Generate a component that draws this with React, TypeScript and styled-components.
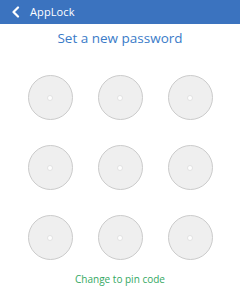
import styled, { createGlobalStyle } from 'styled-components';

const GlobalStyle = createGlobalStyle`
  html, body {
    margin: 0;
    padding: 0;
    background: #ffffff;
    font-family: 'Open Sans', 'Noto Sans', sans-serif;
  }
`;

const DOTS = Array.from({ length: 9 }, (_, i) => i);

export default function App() {
  return (
    <>
      <GlobalStyle />
      <Screen>
        <Header>
          <BackIcon width="10" height="12" viewBox="0 0 10 12">
            <path d="M7 1.5 L2.5 6 L7 10.5" fill="none" stroke="#fff" strokeWidth="2.2" strokeLinecap="round" strokeLinejoin="round" />
          </BackIcon>
          <HeaderTitle>AppLock</HeaderTitle>
        </Header>
        <Title>Set a new password</Title>
        <Pattern>
          {DOTS.map((i) => (
            <Node key={i}>
              <Center />
            </Node>
          ))}
        </Pattern>
        <SwitchLink>Change to pin code</SwitchLink>
      </Screen>
    </>
  );
}

const Screen = styled.div`
  width: 240px;
  height: 300px;
  display: flex;
  flex-direction: column;
  align-items: center;
  background: #fff;
`;

const Header = styled.div`
  width: 100%;
  height: 24px;
  background: #3b73bf;
  display: flex;
  align-items: center;
  padding-left: 11px;
  box-sizing: border-box;
  gap: 9px;
`;

const BackIcon = styled.svg`
  display: block;
`;

const HeaderTitle = styled.span`
  color: #fff;
  font-size: 11px;
  line-height: 14px;
  letter-spacing: 0.1px;
`;

const Title = styled.div`
  margin-top: 4px;
  color: #3a7bc8;
  font-size: 13.5px;
  line-height: 20px;
`;

const Pattern = styled.div`
  margin-top: 27px;
  display: grid;
  grid-template-columns: repeat(3, 45px);
  grid-auto-rows: 45px;
  gap: 25px;
`;

const Node = styled.div`
  width: 45px;
  height: 45px;
  box-sizing: border-box;
  border-radius: 50%;
  background: #efefef;
  border: 1.5px solid #cbcbcb;
  display: flex;
  align-items: center;
  justify-content: center;
`;

const Center = styled.div`
  width: 6px;
  height: 6px;
  box-sizing: border-box;
  border-radius: 50%;
  background: #fff;
  border: 1px solid #e2e2e2;
`;

const SwitchLink = styled.div`
  margin-top: 12px;
  color: #34a862;
  font-size: 10px;
  line-height: 14px;
`;
